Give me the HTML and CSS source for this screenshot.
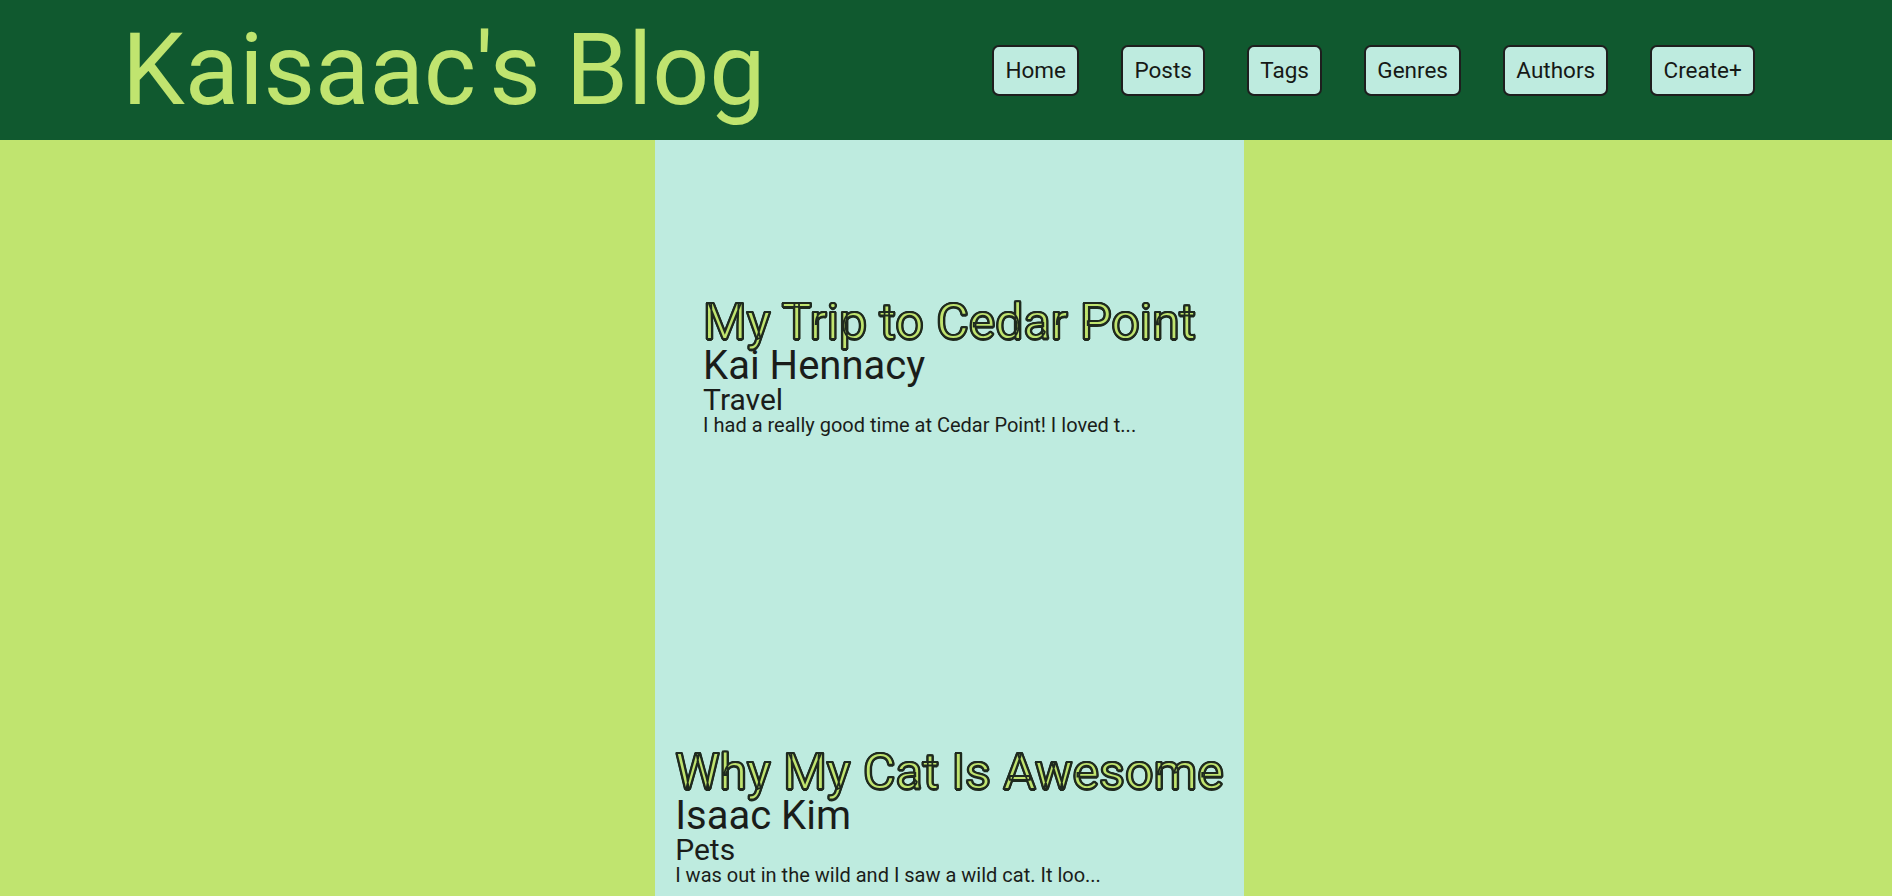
FILE: index.html
```html
<!DOCTYPE html>
<html lang="en">
<head>
<meta charset="utf-8">
<title>Kaisaac's Blog</title>
<link rel="stylesheet" href="styles.css">
</head>
<body>
<header class="site-header">
  <h1 class="site-title">Kaisaac's Blog</h1>
  <nav class="nav">
    <button class="nav-btn">Home</button>
    <button class="nav-btn">Posts</button>
    <button class="nav-btn">Tags</button>
    <button class="nav-btn">Genres</button>
    <button class="nav-btn">Authors</button>
    <button class="nav-btn">Create+</button>
  </nav>
</header>
<main class="layout">
  <section class="feed">
    <article class="post">
      <h2 class="post-title">My Trip to Cedar Point</h2>
      <p class="post-author">Kai Hennacy</p>
      <p class="post-genre">Travel</p>
      <p class="post-summary">I had a really good time at Cedar Point! I loved t...</p>
    </article>
    <article class="post">
      <h2 class="post-title">Why My Cat Is Awesome</h2>
      <p class="post-author">Isaac Kim</p>
      <p class="post-genre">Pets</p>
      <p class="post-summary">I was out in the wild and I saw a wild cat. It loo...</p>
    </article>
  </section>
</main>
</body>
</html>
```
FILE: styles.css
```css
html, body {
  margin: 0;
  padding: 0;
}

body {
  background: #c0e46f;
  font-family: Roboto, "Liberation Sans", sans-serif;
  color: #1a1d1a;
}

.site-header {
  height: 140px;
  background: #10592f;
  display: flex;
  align-items: center;
  justify-content: space-between;
  padding: 0 137px 0 122px;
}

.site-title {
  margin: 0;
  font-size: 100px;
  font-weight: 400;
  line-height: 1;
  color: #c0e46f;
}

.nav {
  display: flex;
  gap: 42px;
}

.nav-btn {
  font-family: Roboto, "Liberation Sans", sans-serif;
  font-size: 22.5px;
  line-height: 26px;
  padding: 10.5px 11.2px;
  border: 2px solid #1e1e1e;
  border-radius: 7px;
  background: #beebdf;
  color: #161916;
}

.layout {
  display: grid;
  grid-template-columns: 655px 589px 1fr;
  min-height: 756px;
}

.feed {
  grid-column: 2;
  background: #beebdf;
  display: flex;
  flex-direction: column;
  align-items: center;
  padding-top: 157px;
  gap: 312px;
}

.post {
  display: flex;
  flex-direction: column;
}

.post p {
  margin: 0;
}

.post-title {
  margin: 0;
  font-size: 50px;
  line-height: 50px;
  font-weight: 400;
  color: #c0e46f;
  -webkit-text-stroke: 1.8px #1f2a1f;
  text-shadow:
    1.5px 0 0 #1f2a1f, -1.5px 0 0 #1f2a1f,
    0 1.5px 0 #1f2a1f, 0 -1.5px 0 #1f2a1f,
    1px 1px 0 #1f2a1f, -1px -1px 0 #1f2a1f,
    1px -1px 0 #1f2a1f, -1px 1px 0 #1f2a1f;
}

.post-author {
  font-size: 40px;
  line-height: 37px;
}

.post-genre {
  font-size: 30px;
  line-height: 32px;
}

.post-summary {
  font-size: 20px;
  line-height: 19px;
}
```
